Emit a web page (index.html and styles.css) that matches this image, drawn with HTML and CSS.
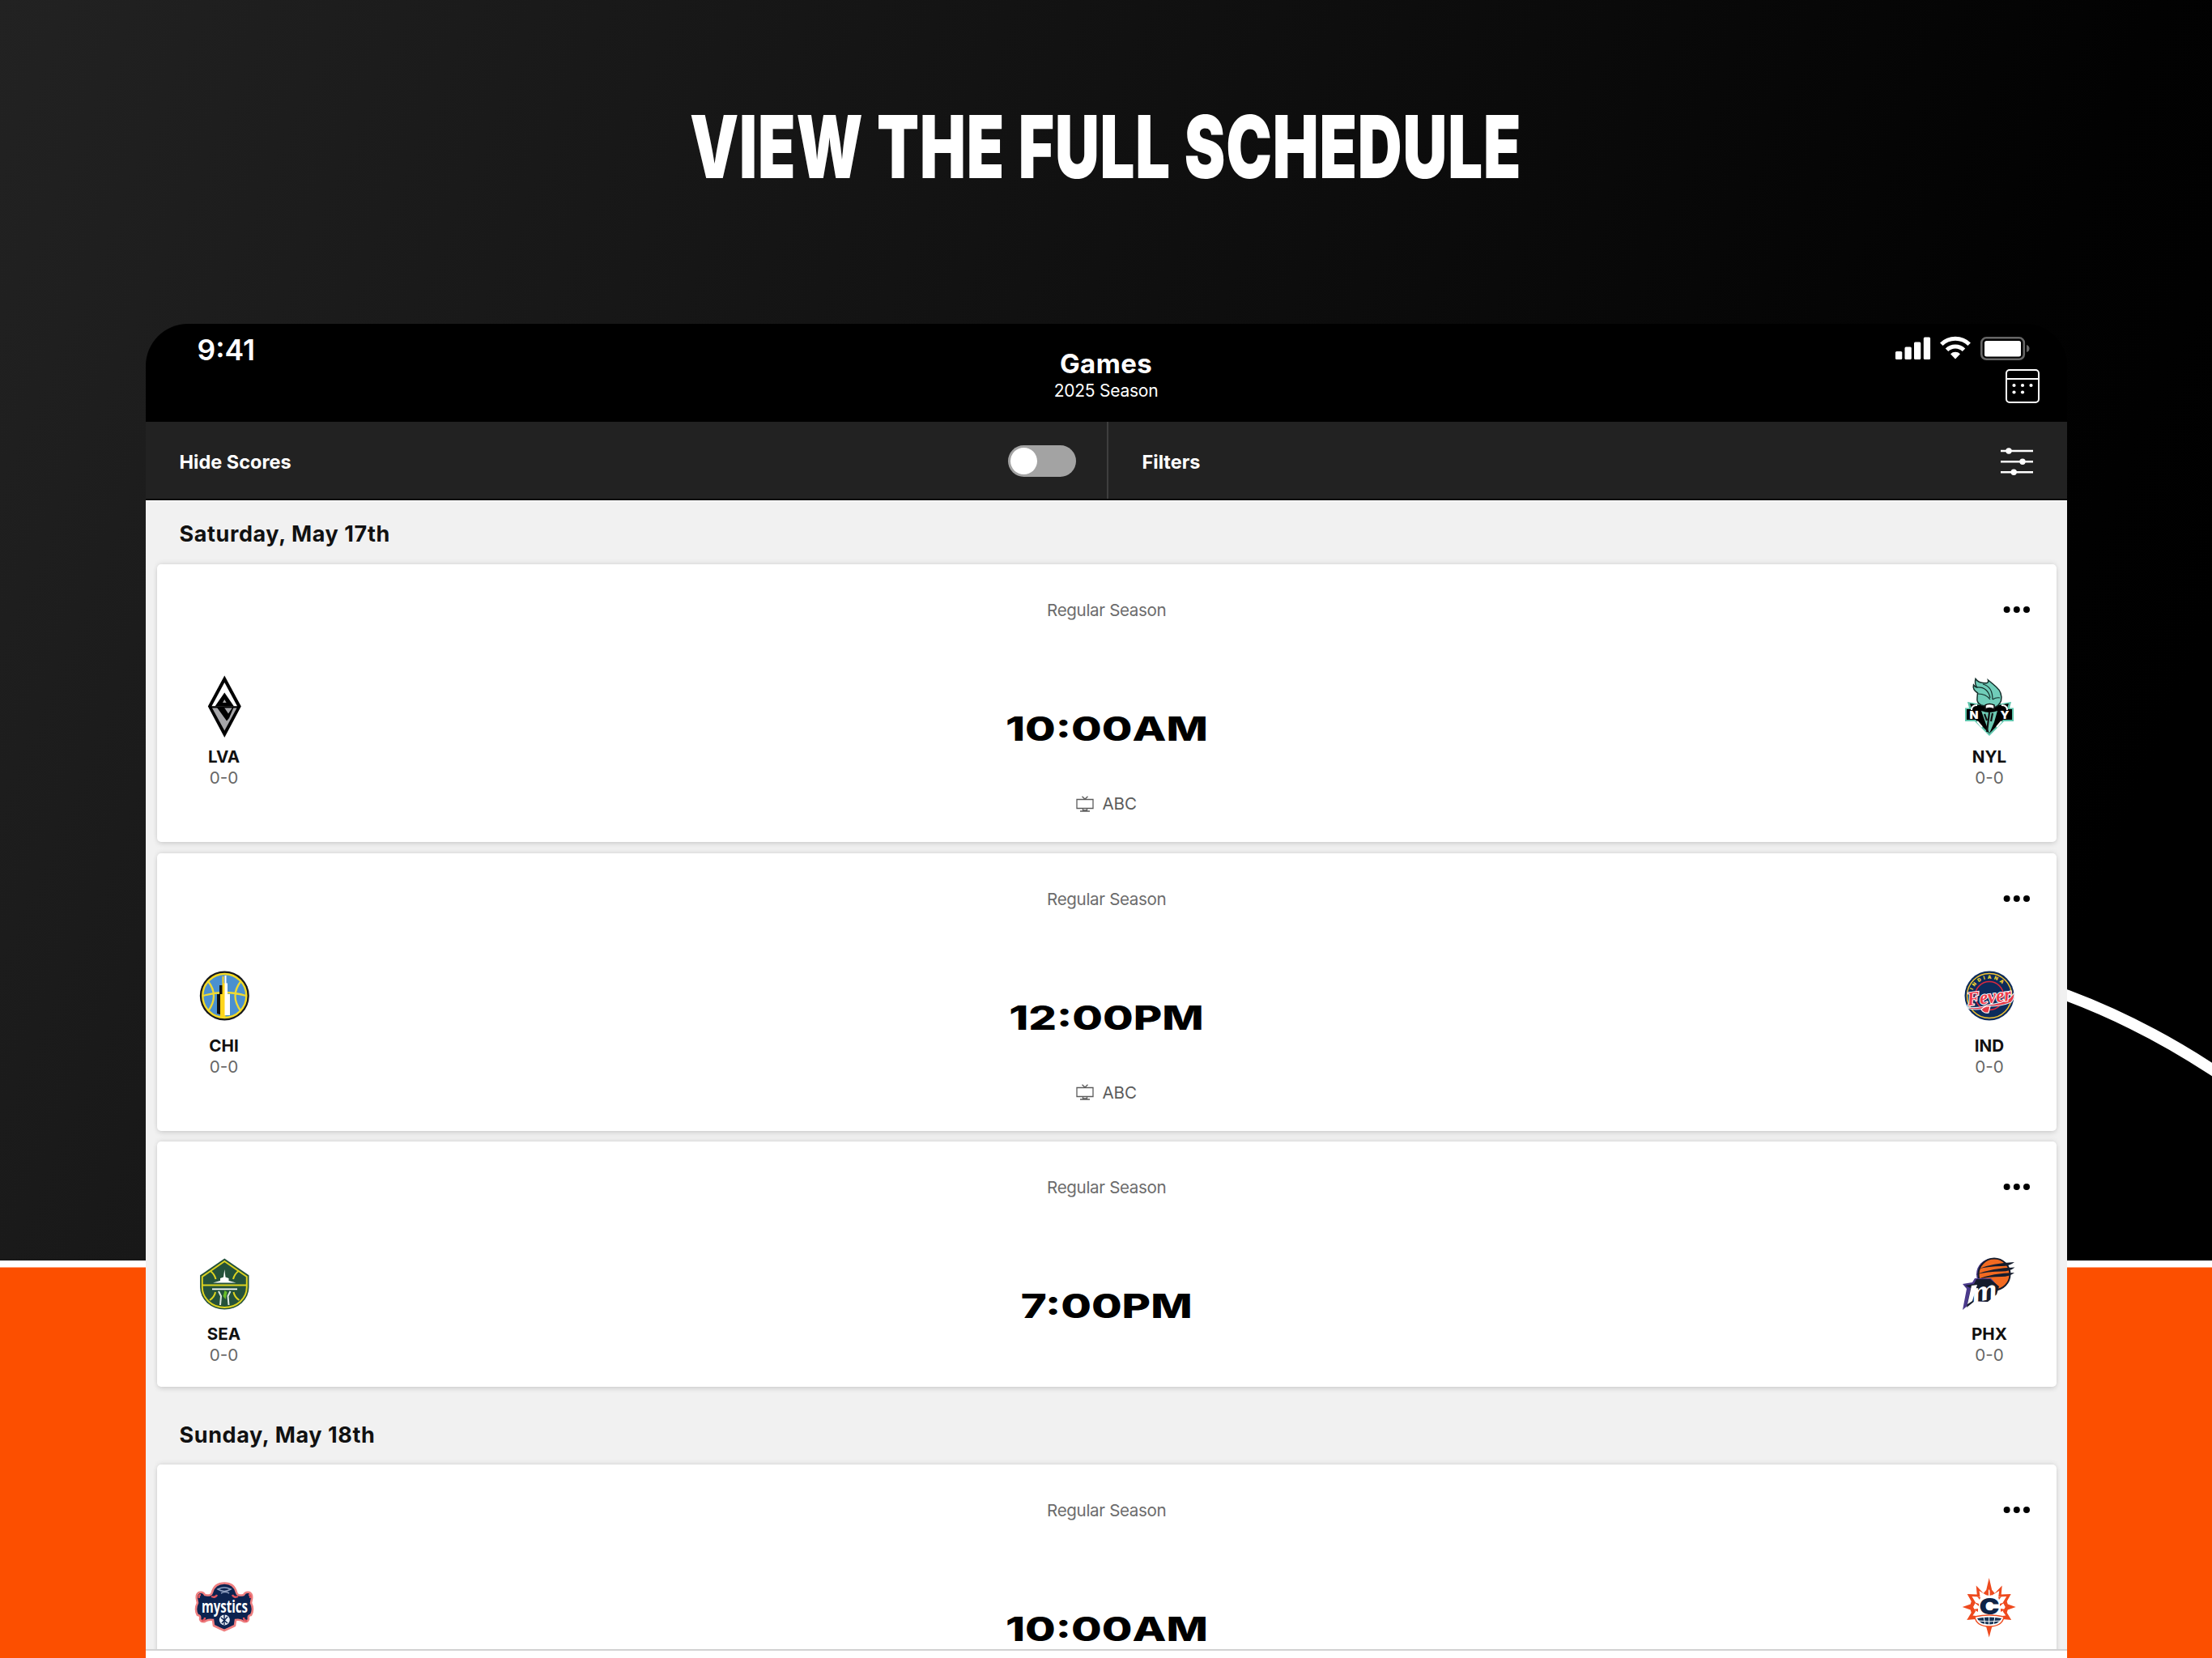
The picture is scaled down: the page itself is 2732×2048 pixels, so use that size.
FILE: index.html
```html
<!DOCTYPE html>
<html lang="en">
<head>
<meta charset="utf-8">
<title>Games</title>
<link rel="stylesheet" href="styles.css">
</head>
<body>
<svg class="backdrop" viewBox="0 0 2732 2048" aria-hidden="true">
  <rect y="1565" width="2732" height="483" fill="#fc4f00"/>
  <rect y="1557" width="2732" height="8.500" fill="#fff"/>
  <path d="M2480 1204L2553 1229.500Q2645 1264 2732 1321L2760 1339" fill="none" stroke="#fff" stroke-width="14"/>
</svg>
<main class="page">
  <h1 class="headline"><span>VIEW THE FULL SCHEDULE</span></h1>
  <section class="device">
    <header class="topbar">
      <div class="clock">9:41</div>
      <div class="title"><h2>Games</h2><p>2025 Season</p></div>
      <div class="tools">
        <svg class="status" width="168" height="32" viewBox="0 0 168 32">
          <g fill="#fff"><rect x="1" y="20" width="8.300" height="10" rx="1.500"/><rect x="12.500" y="14.500" width="8.300" height="15.500" rx="1.500"/><rect x="24" y="8.500" width="8.300" height="21.500" rx="1.500"/><rect x="35.800" y="2.500" width="8.300" height="27.500" rx="1.500"/></g>
          <g fill="none" stroke="#fff" stroke-width="5"><path d="M57.800 11.200a24.500 24.500 0 0 1 34.400 0"/><path d="M64.500 18.200a15 15 0 0 1 21 0"/></g>
          <path d="M75 29.500l-6-6.200a8.500 8.500 0 0 1 12 0z" fill="#fff"/>
          <rect x="107.300" y="3.300" width="52.500" height="26.500" rx="6" fill="none" stroke="#666" stroke-width="2.600"/>
          <rect x="111" y="7" width="45" height="19.500" rx="2.500" fill="#fff"/>
          <path d="M163 12q3.500 1 3.500 4.500t-3.500 4.500z" fill="#666"/>
        </svg>
        <svg class="calendar" width="44" height="44" viewBox="0 0 44 44">
          <rect x="2" y="2" width="40" height="40" rx="4" fill="none" stroke="#fff" stroke-width="2"/>
          <path d="M2 13h40" stroke="#fff" stroke-width="2"/>
          <g fill="#fff"><circle cx="11.500" cy="21" r="2.100"/><circle cx="22" cy="21" r="2.100"/><circle cx="32.500" cy="21" r="2.100"/><circle cx="11.500" cy="29.500" r="2.100"/><circle cx="22" cy="29.500" r="2.100"/></g>
        </svg>
      </div>
    </header>
    <div class="controls">
      <div class="control"><span>Hide Scores</span><i class="toggle"></i></div>
      <div class="control"><span>Filters</span>
        <svg width="40" height="36" viewBox="0 0 40 36"><path d="M0 5h40M0 18.200h40M0 31.300h40" stroke="#fff" stroke-width="2.400"/><g fill="#fff"><circle cx="10" cy="5" r="3.700"/><circle cx="27" cy="18.200" r="3.700"/><circle cx="16.200" cy="31.300" r="3.700"/></g></svg>
      </div>
    </div>
    <div class="list">
      <h3 class="date">Saturday, May 17th</h3>
      <article class="card">
        <div class="team">
          <svg viewBox="0 0 84 84"><path d="M42.300 3.500L62.800 41.500 42.300 80 21.800 41.500z"/><path d="M42.300 12L58 41.300H26.500z" fill="#fff"/><path d="M42.300 24.500L54 41.500H30.500z"/><path d="M27 43.500h30.500L42.300 71.500z" fill="#a6a6a9"/><path d="M33 43h9l5 7.500L52 43h1.500L48 56l-3 3.500z"/><path d="M40 37l2.300-4 2.300 4z" fill="#aaa"/></svg>
          <b>LVA</b><span class="record">0-0</span>
        </div>
        <div class="info"><p class="stage">Regular Season</p><p class="time"><span>10:00AM</span></p>
          <p class="tv"><svg width="22" height="20" viewBox="0 0 22 20"><path d="M1 4.500h20v11H1zM7.500.800L11 4l3.500-3.200M8.500 16v2h5v-2M5 19h12" fill="none" stroke="#5c5c5c" stroke-width="1.300"/></svg><span>ABC</span></p></div>
        <div class="team">
          <svg viewBox="0 0 84 84"><path d="M15 36l12 2h30l12-2-2 7.500h5V60H60L42 78 24 60H12V43.500h5z" fill="#5fc6ad"/><path d="M18 38l12 2h24l12-2-2.500 7H70v13H59L42 75 25 58H14V45h6.500z"/><path d="M20 46q0-6 7-6M64 46q0-6-7-6M27 60l6 7M57 60l-6 7" fill="none" stroke="#fff" stroke-width="2"/><text x="17.500" y="56.500" class="mark" font-size="13" fill="#fff" textLength="11" lengthAdjust="spacingAndGlyphs">N</text><text x="55.500" y="56.500" class="mark" font-size="13" fill="#fff" textLength="11" lengthAdjust="spacingAndGlyphs">Y</text><path d="M32 47q10 4 20 0l-4 14-6 14-5-14z" fill="#6cc9b3"/><path d="M42 49l-3 24M46 50l-2 10M36 51l3 8" stroke="#111" stroke-width="2.200"/><path d="M25 7.500Q28 12 34 12.500 42 14 40.500 9q5 4 10 8.500 8 7 6 17Q54 42 46 43l-14-3Q26 37 27 31l.500-6Q21 21 22.500 15q2 3 4 3-3-5-1.500-10.500z" fill="#70cdb9" stroke="#15302c" stroke-width="1.500"/><path d="M26 18q14-1 17 13M28 26q10 0 15 7M34 14q12 3 12 19M46 33q5-3 9-2" fill="none" stroke="#15302c" stroke-width="1.200"/><path d="M37 40q5-3 11 0v5q-6-3-11 0z" fill="#fff" stroke="#111" stroke-width="1.500"/></svg>
          <b>NYL</b><span class="record">0-0</span>
        </div>
        <i class="more"></i>
      </article>
      <article class="card">
        <div class="team">
          <svg viewBox="0 0 84 84"><circle cx="42.300" cy="42" r="30.500" fill="#16181c"/><circle cx="42.300" cy="42" r="27" fill="#4a90d0" stroke="#f5da25" stroke-width="2.400"/><path d="M16 42q26-8 53 0M22 24q14 18 0 37M62.500 24q-14 18 0 37" fill="none" stroke="#f0da32" stroke-width="2.300"/><path d="M33 40h3V29h4v37l-7-2z" fill="#111"/><path d="M37 40h2.500V18h2v8.500h2V68H37z" fill="#ffd51c"/><path d="M42.500 17h2v9.500h1.500V40h3v26h-6.500z" fill="#fff"/></svg>
          <b>CHI</b><span class="record">0-0</span>
        </div>
        <div class="info"><p class="stage">Regular Season</p><p class="time"><span>12:00PM</span></p>
          <p class="tv"><svg width="22" height="20" viewBox="0 0 22 20"><path d="M1 4.500h20v11H1zM7.500.800L11 4l3.500-3.200M8.500 16v2h5v-2M5 19h12" fill="none" stroke="#5c5c5c" stroke-width="1.300"/></svg><span>ABC</span></p></div>
        <div class="team">
          <svg viewBox="0 0 84 84"><path id="fa" d="M21.500 35A22 22 0 0 1 62.500 35" fill="none"/><circle cx="42" cy="42" r="30.500" fill="#0c2c5c"/><circle cx="42" cy="42" r="27.500" fill="none" stroke="#f4c430" stroke-width="1.500"/><circle cx="42" cy="42" r="17.500" fill="none" stroke="#d8283e" stroke-width="1.500"/><text class="mark" font-size="6" fill="#f4d130"><textPath href="#fa" textLength="44">INDIANA</textPath></text><path d="M15 56q14 2 25-3 16-1 27-8l6-7q0 8-4 12-12 5-27 5-12 6-25 3z" fill="#e63946" stroke="#dcebf5" stroke-width="1.200"/><path d="M32 59q4-5 11-4l-2 8q-6 1-9-4z" fill="#e63946" stroke="#fff" stroke-width="1.200"/><text x="14.500" y="51" class="script" font-size="24" fill="#ee3b4b" stroke="#fff" stroke-width="2" paint-order="stroke" textLength="55" lengthAdjust="spacingAndGlyphs" transform="rotate(-7 42 45)">Fever</text></svg>
          <b>IND</b><span class="record">0-0</span>
        </div>
        <i class="more"></i>
      </article>
      <article class="card short">
        <div class="team">
          <svg viewBox="0 0 84 84"><path d="M42.300 10.500L72.500 31.300V46a30.200 27.500 0 0 1-60.400 0V31.300z" fill="#25523a"/><path d="M42.300 14L69.800 33v13a27.500 25 0 0 1-55 0V33zM15 43.500h55M25 26q5 4 6.500 10M59.500 26q-5 4-6.500 10M24 62q6-4 7-10M60.500 62q-6-4-7-10" fill="none" stroke="#ddd321" stroke-width="2"/><path d="M42.300 24l1.200 9.500 4 1.500v3l9 2.500H28l9-2.500v-3l4-1.500zM27 47.500h31v1.700H27z" fill="#fff"/><path d="M35 51l3 6-1 11M49.500 51l-3 6 1 11" fill="none" stroke="#dfe8e0" stroke-width="2"/><path d="M42.500 50l3 2-2 9-3-4z" fill="#69be28"/></svg>
          <b>SEA</b><span class="record">0-0</span>
        </div>
        <div class="info"><p class="stage">Regular Season</p><p class="time"><span>7:00PM</span></p></div>
        <div class="team">
          <svg viewBox="0 0 84 84"><circle cx="45.500" cy="30" r="19.500" fill="#4b3a8c"/><circle cx="48" cy="30" r="19.500" fill="#f26a21" stroke="#151c2c" stroke-width="2"/><path d="M28 23.500Q46 16 73 15q-6 5-16 5-16 0-29 3.500zM25 30.500Q46 22 73.500 21.500q-6 5-16 5-18 0-32.500 4zM28 36Q46 28.500 73 28q-6 5-16 5-16 0-29 3z" fill="#151c2c"/><path d="M9 42l12-2 3-5h20l9 10-3 8-11 11-17-1-13 11 5-26z" fill="#4b3a8c"/><path d="M12 44l11-2 3-6h17l11 9-3 10-11 9-16-1-10 8 5-24z" fill="#151c2c"/><path d="M20 44l7-1-6 20-6 4z" fill="#fff"/><text x="20" y="62" class="script" font-size="36" fill="#fff" textLength="32" lengthAdjust="spacingAndGlyphs" transform="rotate(-10 36 52)">m</text></svg>
          <b>PHX</b><span class="record">0-0</span>
        </div>
        <i class="more"></i>
      </article>
      <h3 class="date second">Sunday, May 18th</h3>
      <article class="card last">
        <div class="team">
          <svg viewBox="0 0 84 84"><path d="M42.300 12.500Q54 12.500 57 24q1 5 9 3 2-4 7-3 4 2 3 8l-1 5q4 8 0 15-4 0-3 5-1 4-6 3-4-3-10-2l-1 7q-6 3-13 6-7-3-13-6l-1-7q-6-1-10 2-5 1-6-3 1-5-3-5-4-7 0-15l-1-5q-1-6 3-8 5-1 7 3 8 2 9-3 3-11.500 15.300-11.500z" fill="#0c2350" stroke="#ee7f80" stroke-width="2.600"/><path d="M26 29q5 2 7-2M59 29q-5 2-7-2M13 27q-3 0-2 4M72 27q3 0 2 4M14 59q4 0 4-4M70 59q-4 0-4-4" fill="none" stroke="#e3545e" stroke-width="2.400"/><path d="M34 20q8-4 16 0-8 5-16 0zM38 25q5-3 10 0" fill="none" stroke="#8f9fc0" stroke-width="1.500"/><circle cx="42.300" cy="58" r="6.500" fill="#e8edf5"/><path d="M38 55l8 7M46 54l-7 8M42 51v13" stroke="#0c2350" stroke-width="1.400"/><text x="14" y="48.500" class="mystic" font-size="21" fill="#fff" textLength="57" lengthAdjust="spacingAndGlyphs">mystics</text></svg>
        </div>
        <div class="info"><p class="stage">Regular Season</p><p class="time"><span>10:00AM</span></p></div>
        <div class="team">
          <svg viewBox="0 0 84 84"><g fill="#ee4a1e"><path d="M41.700 6l3.500 15 3.500 4 9-9.500-1 11 12-.500-5 9 1 3.500 10 3.500-10 3.500-1 3.500 5.500 9-11-1-8 7-5 2.500-3.500 13-3.500-13-5-2.500-8-7-11 1 5.500-9-1-3.500-10-3.500 10-3.500 1-3.500-5-9 12 .500-1-11 9 9.500 3.500-4z"/></g><path d="M41.700 20l3.500 7.500 9-5.500-1 7.500 10-.500-4.500 7.500 3 5.500-3 5.500 3.500 5-8 1H29.500l-8-1 3.500-5-3-5.500 3-5.500-4.500-7.500 10 .500-1-7.500 9 5.500z" fill="#fff"/><path d="M23 36l6 2v3zM61 36l-6 2v3zM22 45l6-1v4zM62 45l-6-1v4zM27 29l4 1-1 3zM57 29l-4 1 1 3zM38 27l3-6v7zM45.500 27l-3-6v7z" fill="#ee4a1e"/><text x="29.500" y="51" class="mark" font-size="27" fill="#0f2346" textLength="25" lengthAdjust="spacingAndGlyphs">C</text><path d="M24 54q18-4 36 0-2 12-18 12T24 54z" fill="#fff" stroke="#ee4a1e" stroke-width="1.500"/><path d="M27 56q15-3 30 0-3 7.500-15 7.500T27 56z" fill="#173355"/><path d="M35 54l2 10M41.700 54v10M49 54l-2 10M28 59q14 2 28 0" fill="none" stroke="#fff" stroke-width="1"/></svg>
        </div>
        <i class="more"></i>
      </article>
    </div>
    <footer class="tabbar"></footer>
  </section>
</main>
</body>
</html>
```
FILE: styles.css
```css
* { box-sizing: border-box; margin: 0; padding: 0; }
body {
  width: 2732px;
  height: 2048px;
  overflow: hidden;
  background: linear-gradient(113deg, #222 0%, #020202 74%, #000 85%);
  font-family: Inter, "Liberation Sans", sans-serif;
  color: #111;
}
.backdrop { position: absolute; left: 0; top: 0; width: 2732px; height: 2048px; }
.page { position: relative; display: flex; flex-direction: column; align-items: center; height: 2048px; }
.headline { height: 400px; padding-top: 121px; font-size: 107.500px; line-height: 120px; font-weight: 900; color: #fff; white-space: nowrap; }
.headline span { display: inline-block; transform: scaleX(.706); word-spacing: 1px; letter-spacing: 1.200px; }
.device {
  display: flex;
  flex-direction: column;
  width: 2373px;
  height: 1648px;
  border-radius: 52px 52px 0 0;
  overflow: hidden;
}
.topbar { display: grid; grid-template-columns: 1fr 1fr 1fr; height: 121px; background: #000; color: #fff; }
.clock { padding: 13px 0 0 64px; font-size: 35.500px; line-height: 40px; font-weight: 600; }
.title { padding-top: 29px; text-align: center; }
.title h2 { font-size: 33px; line-height: 40px; font-weight: 700; letter-spacing: .4px; }
.title p { font-size: 21px; line-height: 28px; letter-spacing: -.25px; }
.tools { display: flex; flex-direction: column; align-items: flex-end; padding: 14px 33px 0 0; }
.status { margin-right: 12px; }
.calendar { margin-top: 9px; }
.controls { display: grid; grid-template-columns: 1187px 1fr; height: 97px; background: #222; border-bottom: 2px solid #080808; color: #fff; }
.control { display: flex; align-items: center; justify-content: space-between; padding: 2px 38px 0 42px; font-size: 23.500px; font-weight: 700; }
.control span { padding-top: 2px; }
.control + .control { padding-right: 42px; border-left: 2px solid #3e3e3e; }
.toggle { width: 84px; height: 39px; padding: 3px; border-radius: 20px; background: #a3a3a3; }
.toggle::before { content: ""; display: block; width: 33px; height: 33px; border-radius: 50%; background: #fff; }
.list { height: 1419px; padding: 0 12.500px 0 14px; overflow: hidden; background: #f1f1f1; border-top: 1px solid #fff; }
.date { height: 78px; padding: 21px 0 0 28px; font-size: 27px; line-height: 40px; font-weight: 700; letter-spacing: .6px; }
.date.second { height: 96px; padding-top: 40px; }
.card {
  display: grid;
  position: relative;
  grid-template-columns: 166px 1fr 166px;
  height: 343px;
  margin-bottom: 13.500px;
  border-radius: 5px;
  background: #fff;
  box-shadow: 0 3px 6px -1px rgba(0, 0, 0, .15), 0 -2px 6px -1px rgba(0, 0, 0, .1);
}
.card.short { height: 303px; margin-bottom: 0; }
.card.last { height: 240px; }
.team { display: flex; flex-direction: column; align-items: center; padding-top: 134px; font-size: 20.600px; line-height: 26px; }
.team svg { width: 84px; height: 84px; margin-bottom: 7px; }
.record { color: #666; }
.info { text-align: center; font-size: 20.600px; }
.stage { padding-top: 43px; line-height: 27px; color: #6c6c6c; letter-spacing: -.35px; }
.time { margin-top: 103px; font-size: 41px; line-height: 60px; font-weight: 800; color: #000; }
.time span { display: inline-block; transform: scaleX(1.330); }
.tv { display: flex; justify-content: center; align-items: center; gap: 10px; margin-top: 49px; line-height: 27px; color: #5c5c5c; }
.more { position: absolute; right: 33px; top: 52px; width: 8px; height: 8px; border-radius: 50%; background: #000; box-shadow: -12.200px 0 #000, -24.400px 0 #000; }
.tabbar { height: 11px; background: #fff; border-top: 2px solid #d2d2d2; }
.mark { font-family: Inter, sans-serif; font-weight: 900; }
.script { font-family: "Liberation Serif", serif; font-style: italic; font-weight: 700; }
.mystic { font-family: "Open Sans", sans-serif; font-weight: 700; }
```
